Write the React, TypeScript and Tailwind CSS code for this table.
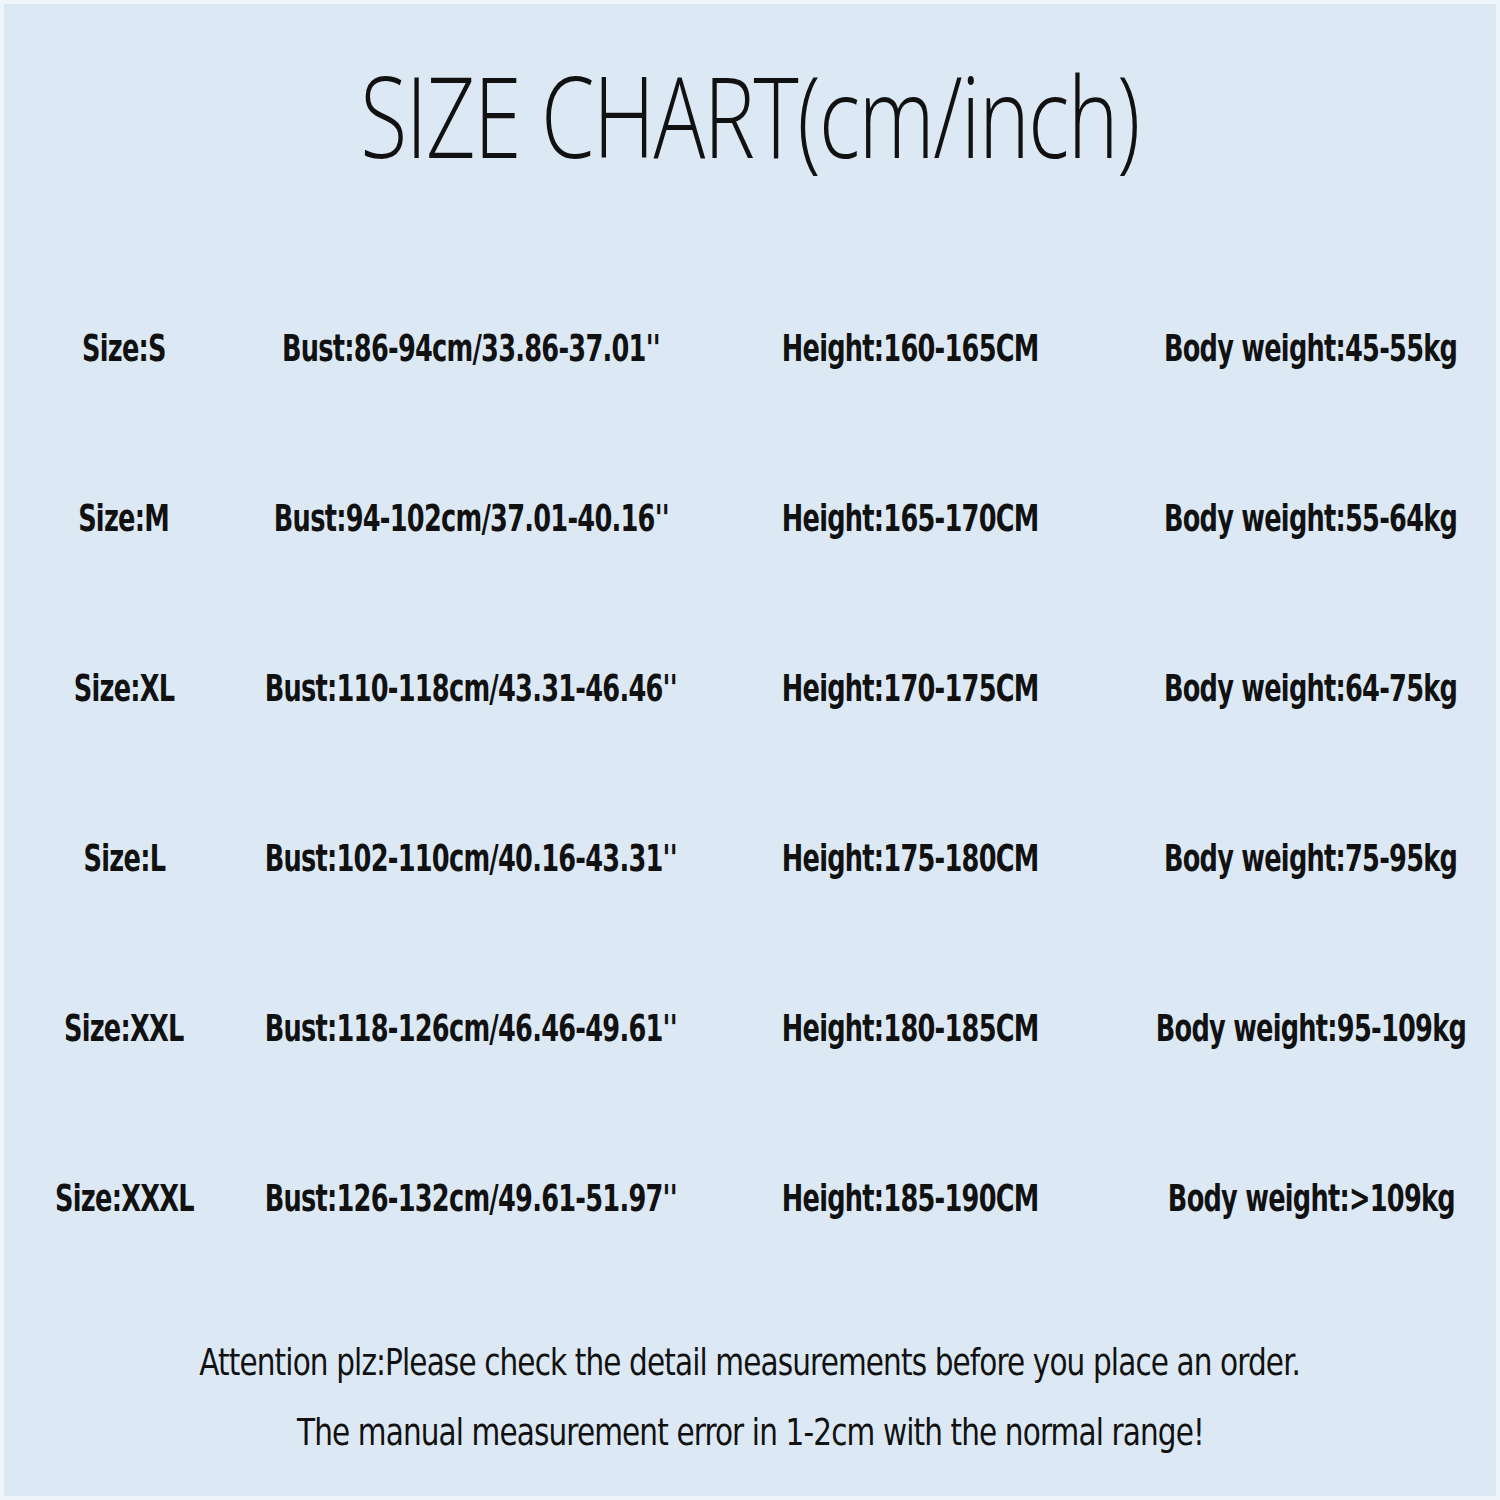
import React from 'react';

const rows = [
  ['Size:S', 'Bust:86-94cm/33.86-37.01\'\'', 'Height:160-165CM', 'Body weight:45-55kg'],
  ['Size:M', 'Bust:94-102cm/37.01-40.16\'\'', 'Height:165-170CM', 'Body weight:55-64kg'],
  ['Size:XL', 'Bust:110-118cm/43.31-46.46\'\'', 'Height:170-175CM', 'Body weight:64-75kg'],
  ['Size:L', 'Bust:102-110cm/40.16-43.31\'\'', 'Height:175-180CM', 'Body weight:75-95kg'],
  ['Size:XXL', 'Bust:118-126cm/46.46-49.61\'\'', 'Height:180-185CM', 'Body weight:95-109kg'],
  ['Size:XXXL', 'Bust:126-132cm/49.61-51.97\'\'', 'Height:185-190CM', 'Body weight:>109kg'],
];

export default function App() {
  return (
    <div className="w-[1500px] h-[1500px] bg-[#dce9f5] border-[4px] border-[#eef5fb] text-[#111] flex flex-col overflow-hidden">
      {/* Title */}
      <div className="mt-[41px] h-[140px] flex justify-center font-['Open_Sans',sans-serif]">
        <h1 className="inline-block scale-x-[0.77] whitespace-nowrap text-[112px] leading-[140px] font-light tracking-[-2px]">
          SIZE CHART(cm/inch)
        </h1>
      </div>

      {/* Size rows */}
      <div className="mt-[138px] flex flex-col font-['DejaVu_Sans_Condensed','DejaVu_Sans',sans-serif] font-bold text-[38px] tracking-[-1px]">
        {rows.map((r) => (
          <div key={r[0]} className="grid grid-cols-[240px_454px_424px_378px] h-[170px] items-start">
            {r.map((c, i) => (
              <div key={i} className="flex justify-center leading-[50px] whitespace-nowrap">
                <span className="inline-block scale-x-[0.75]">{c}</span>
              </div>
            ))}
          </div>
        ))}
      </div>

      {/* Notes */}
      <div className="-mt-[16px] flex flex-col items-center font-['DejaVu_Sans_Condensed','DejaVu_Sans',sans-serif] text-[38px] leading-[70px] tracking-[-1px]">
        <p className="inline-block scale-x-[0.863] whitespace-nowrap">
          Attention plz:Please check the detail measurements before you place an order.
        </p>
        <p className="inline-block scale-x-[0.863] whitespace-nowrap">
          The manual measurement error in 1-2cm with the normal range!
        </p>
      </div>
    </div>
  );
}
